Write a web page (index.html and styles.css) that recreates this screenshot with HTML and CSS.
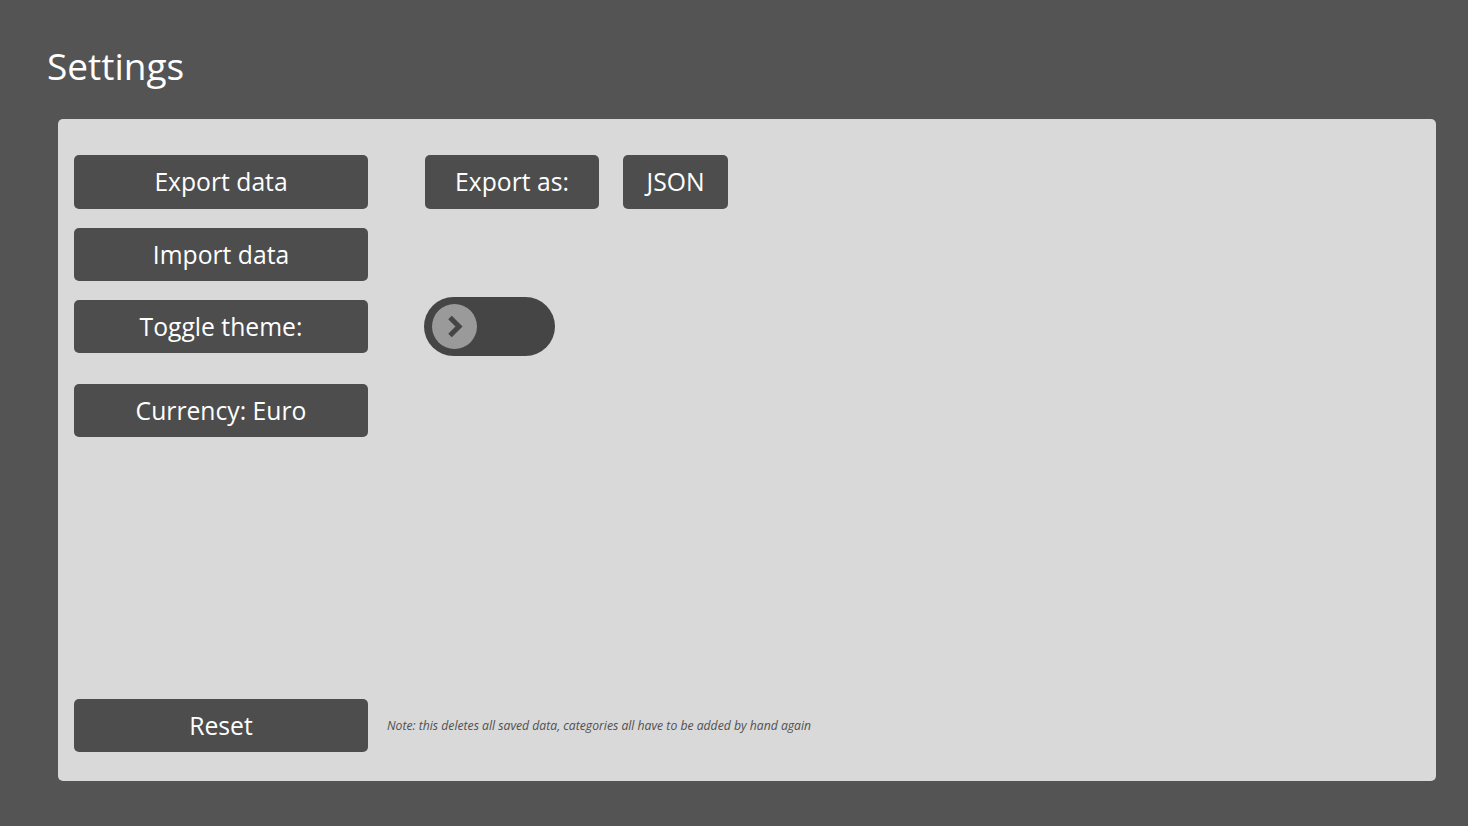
FILE: index.html
```html
<!DOCTYPE html>
<html>
<head>
<meta charset="utf-8">
<link rel="stylesheet" href="styles.css">
</head>
<body>
<h1 class="title">Settings</h1>
<main class="panel">
  <div class="row row-export">
    <button class="btn btn-main">Export data</button>
    <button class="btn btn-as">Export as:</button>
    <button class="btn btn-json">JSON</button>
  </div>
  <div class="row row-import">
    <button class="btn btn-main">Import data</button>
  </div>
  <div class="row row-theme">
    <button class="btn btn-main">Toggle theme:</button>
    <div class="toggle">
      <span class="knob">
        <svg width="45" height="45" viewBox="0 0 45 45"><path d="M18 13.5 L27 22.5 L18 31.5" fill="none" stroke="#454545" stroke-width="5" stroke-linecap="butt" stroke-linejoin="miter"/></svg>
      </span>
    </div>
  </div>
  <div class="row row-currency">
    <button class="btn btn-main">Currency: Euro</button>
  </div>
  <div class="spacer"></div>
  <div class="row row-reset">
    <button class="btn btn-main">Reset</button>
    <p class="note">Note: this deletes all saved data, categories all have to be added by hand again</p>
  </div>
</main>
</body>
</html>
```

FILE: styles.css
```css
html, body {
  margin: 0;
  padding: 0;
}
body {
  background: #545454;
  font-family: "Open Sans", "Noto Sans", sans-serif;
  width: 1468px;
  height: 826px;
  overflow: hidden;
}
.title {
  margin: 0;
  padding: 41px 0 0 47px;
  height: 77px;
  box-sizing: border-box;
  font-size: 37px;
  font-weight: 400;
  line-height: 50px;
  color: #ffffff;
}
.panel {
  margin: 42px 0 0 58px;
  width: 1378px;
  height: 662px;
  box-sizing: border-box;
  background: #d9d9d9;
  border-radius: 5px;
  padding: 36px 16px 29px 16px;
  display: flex;
  flex-direction: column;
}
.row {
  display: flex;
  align-items: center;
}
.row-import { margin-top: 19px; }
.row-theme { margin-top: 16px; }
.row-currency { margin-top: 28px; }
.spacer { flex: 1; }
.btn {
  border: none;
  background: #4d4d4d;
  color: #ffffff;
  font-family: "Open Sans", "Noto Sans", sans-serif;
  font-size: 24.7px;
  height: 54px;
  border-radius: 5px;
  padding: 0;
  box-sizing: border-box;
  line-height: 54px;
}
.row-import .btn, .row-theme .btn, .row-currency .btn, .row-reset .btn { height: 53px; line-height: 53px; }
.btn-main { width: 294px; }
.btn-as { width: 174px; margin-left: 57px; }
.btn-json { width: 105px; margin-left: 24px; }
.toggle {
  margin-left: 56px;
  width: 131px;
  height: 59px;
  border-radius: 30px;
  background: #454545;
  display: flex;
  align-items: center;
  padding-left: 8px;
  box-sizing: border-box;
}
.knob {
  width: 45px;
  height: 45px;
  border-radius: 50%;
  background: #9a9a9a;
  display: flex;
  align-items: center;
  justify-content: center;
}
.knob svg { display: block; }
.note {
  margin: 0 0 0 19px;
  font-size: 12.2px;
  font-style: italic;
  color: #505050;
}
```
